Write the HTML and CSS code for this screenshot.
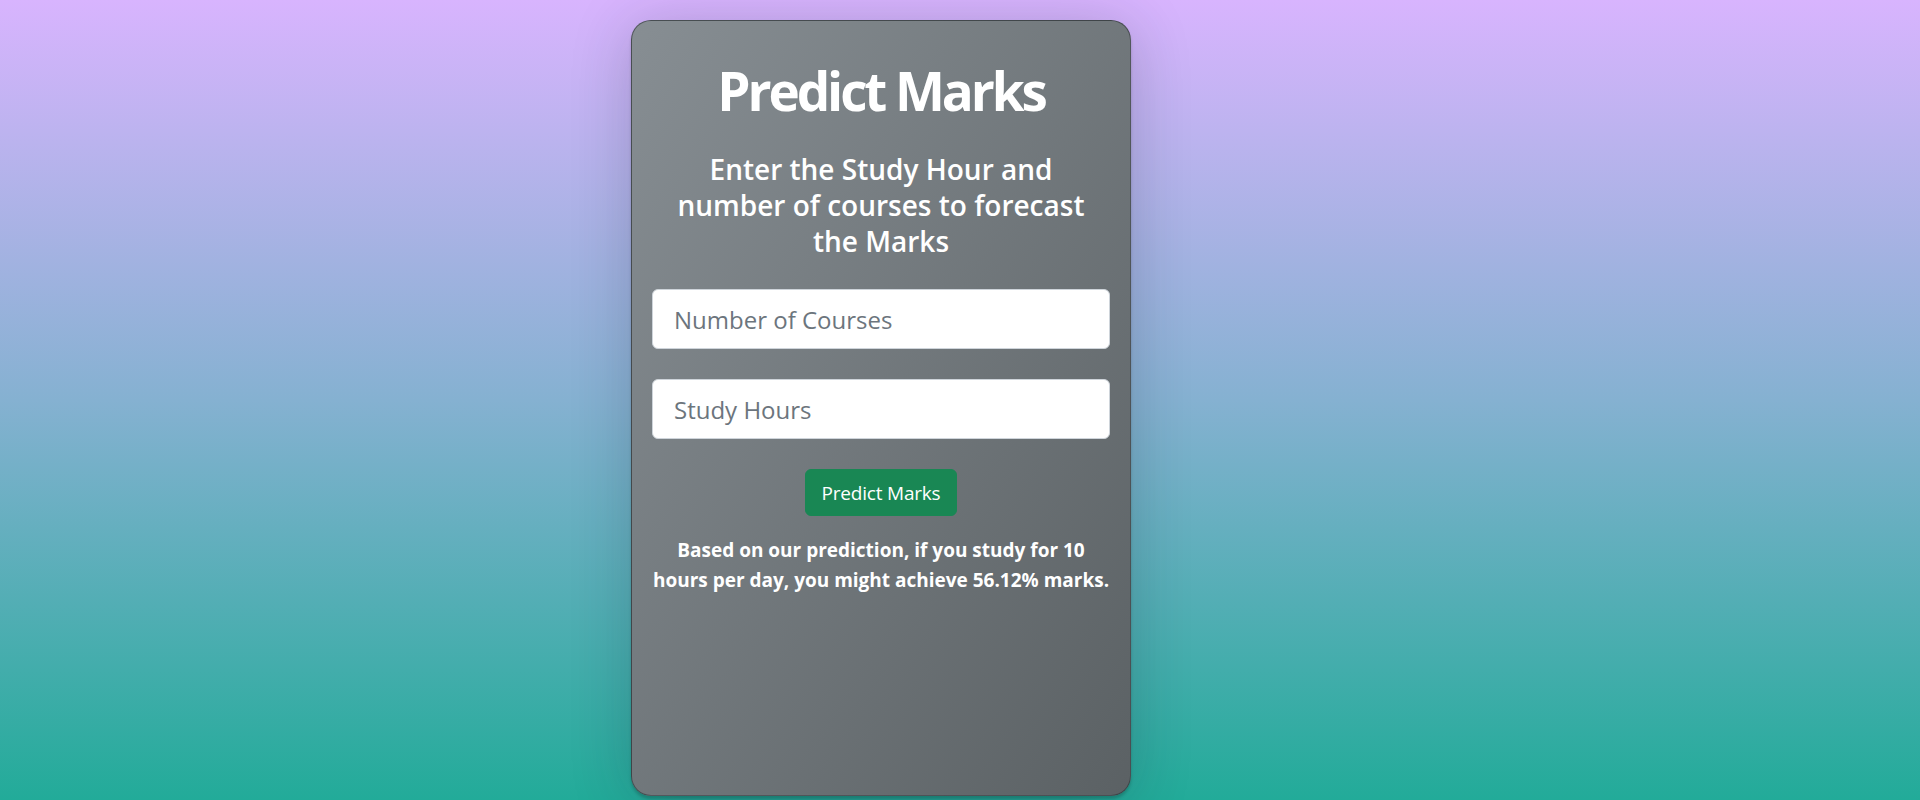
FILE: index.html
```html
<!DOCTYPE html>
<html lang="en">
<head>
<meta charset="utf-8">
<title>Predict Marks</title>
<link rel="stylesheet" href="styles.css">
</head>
<body>
<div class="page">
  <div class="card">
    <h1 class="title">Predict Marks</h1>
    <h3 class="subtitle">Enter the Study Hour and number of courses to forecast the Marks</h3>
    <form class="form">
      <input class="field" type="text" placeholder="Number of Courses">
      <input class="field" type="text" placeholder="Study Hours">
      <button class="btn" type="button">Predict Marks</button>
    </form>
    <p class="result">Based on our prediction, if you study for 10 hours per day, you might achieve 56.12% marks.</p>
  </div>
</div>
</body>
</html>
```
FILE: styles.css
```css
html, body {
  margin: 0;
  padding: 0;
  height: 100%;
}
body {
  background: linear-gradient(to bottom, #d8b4fe 0%, #85b1d1 50%, #22ab99 100%);
  font-family: "Open Sans", "Noto Sans", sans-serif;
  color: #fff;
  overflow: hidden;
}
.page {
  padding: 20px 0 0 631px;
}
.card {
  box-sizing: border-box;
  width: 500px;
  height: 776px;
  border: 1px solid rgba(40, 45, 50, 0.55);
  border-radius: 20px;
  background: linear-gradient(to bottom right, #878e93, #5b6164);
  box-shadow: 0 3px 3px rgba(0, 0, 0, 0.18), 0 6px 60px rgba(30, 30, 60, 0.22);
  padding: 20px 20px;
  display: flex;
  flex-direction: column;
  align-items: center;
}
.title {
  margin: 16px 0 0;
  font-size: 53px;
  line-height: 67px;
  font-weight: 700;
  letter-spacing: -3.1px;
  text-align: center;
}
.subtitle {
  margin: 27px 0 0;
  width: 420px;
  font-size: 28px;
  line-height: 36px;
  font-weight: 600;
  text-align: center;
}
.form {
  margin-top: 30px;
  width: 100%;
  display: flex;
  flex-direction: column;
  align-items: center;
  gap: 30px;
}
.field {
  box-sizing: border-box;
  width: 100%;
  height: 60px;
  padding: 0 21px;
  border: 1px solid #ced4da;
  border-radius: 6px;
  background: #fff;
  font-family: inherit;
  font-size: 24px;
  color: #212529;
}
.field::placeholder {
  color: #6c757d;
}
.btn {
  box-sizing: border-box;
  height: 47px;
  padding: 0 16px;
  border: 1px solid #198754;
  border-radius: 6px;
  background: #198754;
  color: #fff;
  font-family: inherit;
  font-size: 19px;
  letter-spacing: -0.2px;
}
.result {
  margin: 19px 0 0;
  width: 460px;
  font-size: 19px;
  line-height: 30px;
  font-weight: 700;
  text-align: center;
}
```
